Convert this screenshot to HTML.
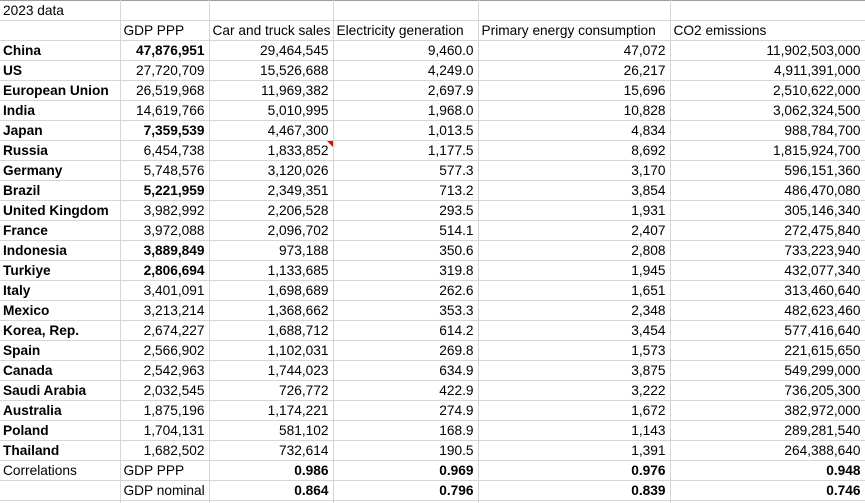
<!DOCTYPE html>
<html><head><meta charset="utf-8"><style>
html,body{margin:0;padding:0;background:#fff;width:865px;height:503px;overflow:hidden}
table{border-collapse:collapse;table-layout:fixed;width:865px;font-family:"Liberation Sans",Arial,sans-serif;font-size:13.7px;color:#000;border-top:1px solid #9e9e9e}
td{height:19px;padding:0 4px 0 3px;border-right:1px solid #d6d6d6;border-bottom:1px solid #d6d6d6;white-space:nowrap;overflow:visible;line-height:19px}
td.r{text-align:right}
td.b,.b{font-weight:bold}
td.last{border-right:1px solid #9e9e9e}
.tri{position:relative}
.tri:after{content:"";position:absolute;right:0;top:0;border-top:6px solid #e00;border-left:6px solid transparent}
</style></head><body>
<table>
<colgroup><col style="width:120px"><col style="width:89px"><col style="width:124px"><col style="width:145px"><col style="width:192px"><col style="width:195px"></colgroup>
<tr><td>2023 data</td><td></td><td></td><td></td><td></td><td class="last"></td></tr>
<tr><td></td><td>GDP PPP</td><td>Car and truck sales</td><td>Electricity generation</td><td>Primary energy consumption</td><td class="last">CO2 emissions</td></tr>
<tr><td class="b">China</td><td class="r b">47,876,951</td><td class="r">29,464,545</td><td class="r">9,460.0</td><td class="r">47,072</td><td class="r last">11,902,503,000</td></tr>
<tr><td class="b">US</td><td class="r">27,720,709</td><td class="r">15,526,688</td><td class="r">4,249.0</td><td class="r">26,217</td><td class="r last">4,911,391,000</td></tr>
<tr><td class="b">European Union</td><td class="r">26,519,968</td><td class="r">11,969,382</td><td class="r">2,697.9</td><td class="r">15,696</td><td class="r last">2,510,622,000</td></tr>
<tr><td class="b">India</td><td class="r">14,619,766</td><td class="r">5,010,995</td><td class="r">1,968.0</td><td class="r">10,828</td><td class="r last">3,062,324,500</td></tr>
<tr><td class="b">Japan</td><td class="r b">7,359,539</td><td class="r">4,467,300</td><td class="r">1,013.5</td><td class="r">4,834</td><td class="r last">988,784,700</td></tr>
<tr><td class="b">Russia</td><td class="r">6,454,738</td><td class="r tri">1,833,852</td><td class="r">1,177.5</td><td class="r">8,692</td><td class="r last">1,815,924,700</td></tr>
<tr><td class="b">Germany</td><td class="r">5,748,576</td><td class="r">3,120,026</td><td class="r">577.3</td><td class="r">3,170</td><td class="r last">596,151,360</td></tr>
<tr><td class="b">Brazil</td><td class="r b">5,221,959</td><td class="r">2,349,351</td><td class="r">713.2</td><td class="r">3,854</td><td class="r last">486,470,080</td></tr>
<tr><td class="b">United Kingdom</td><td class="r">3,982,992</td><td class="r">2,206,528</td><td class="r">293.5</td><td class="r">1,931</td><td class="r last">305,146,340</td></tr>
<tr><td class="b">France</td><td class="r">3,972,088</td><td class="r">2,096,702</td><td class="r">514.1</td><td class="r">2,407</td><td class="r last">272,475,840</td></tr>
<tr><td class="b">Indonesia</td><td class="r b">3,889,849</td><td class="r">973,188</td><td class="r">350.6</td><td class="r">2,808</td><td class="r last">733,223,940</td></tr>
<tr><td class="b">Turkiye</td><td class="r b">2,806,694</td><td class="r">1,133,685</td><td class="r">319.8</td><td class="r">1,945</td><td class="r last">432,077,340</td></tr>
<tr><td class="b">Italy</td><td class="r">3,401,091</td><td class="r">1,698,689</td><td class="r">262.6</td><td class="r">1,651</td><td class="r last">313,460,640</td></tr>
<tr><td class="b">Mexico</td><td class="r">3,213,214</td><td class="r">1,368,662</td><td class="r">353.3</td><td class="r">2,348</td><td class="r last">482,623,460</td></tr>
<tr><td class="b">Korea, Rep.</td><td class="r">2,674,227</td><td class="r">1,688,712</td><td class="r">614.2</td><td class="r">3,454</td><td class="r last">577,416,640</td></tr>
<tr><td class="b">Spain</td><td class="r">2,566,902</td><td class="r">1,102,031</td><td class="r">269.8</td><td class="r">1,573</td><td class="r last">221,615,650</td></tr>
<tr><td class="b">Canada</td><td class="r">2,542,963</td><td class="r">1,744,023</td><td class="r">634.9</td><td class="r">3,875</td><td class="r last">549,299,000</td></tr>
<tr><td class="b">Saudi Arabia</td><td class="r">2,032,545</td><td class="r">726,772</td><td class="r">422.9</td><td class="r">3,222</td><td class="r last">736,205,300</td></tr>
<tr><td class="b">Australia</td><td class="r">1,875,196</td><td class="r">1,174,221</td><td class="r">274.9</td><td class="r">1,672</td><td class="r last">382,972,000</td></tr>
<tr><td class="b">Poland</td><td class="r">1,704,131</td><td class="r">581,102</td><td class="r">168.9</td><td class="r">1,143</td><td class="r last">289,281,540</td></tr>
<tr><td class="b">Thailand</td><td class="r">1,682,502</td><td class="r">732,614</td><td class="r">190.5</td><td class="r">1,391</td><td class="r last">264,388,640</td></tr>
<tr><td>Correlations</td><td>GDP PPP</td><td class="r b">0.986</td><td class="r b">0.969</td><td class="r b">0.976</td><td class="r b last">0.948</td></tr>
<tr><td></td><td>GDP nominal</td><td class="r b">0.864</td><td class="r b">0.796</td><td class="r b">0.839</td><td class="r b last">0.746</td></tr>
<tr><td></td><td></td><td></td><td></td><td></td><td class="last"></td></tr>
</table>
</body></html>
